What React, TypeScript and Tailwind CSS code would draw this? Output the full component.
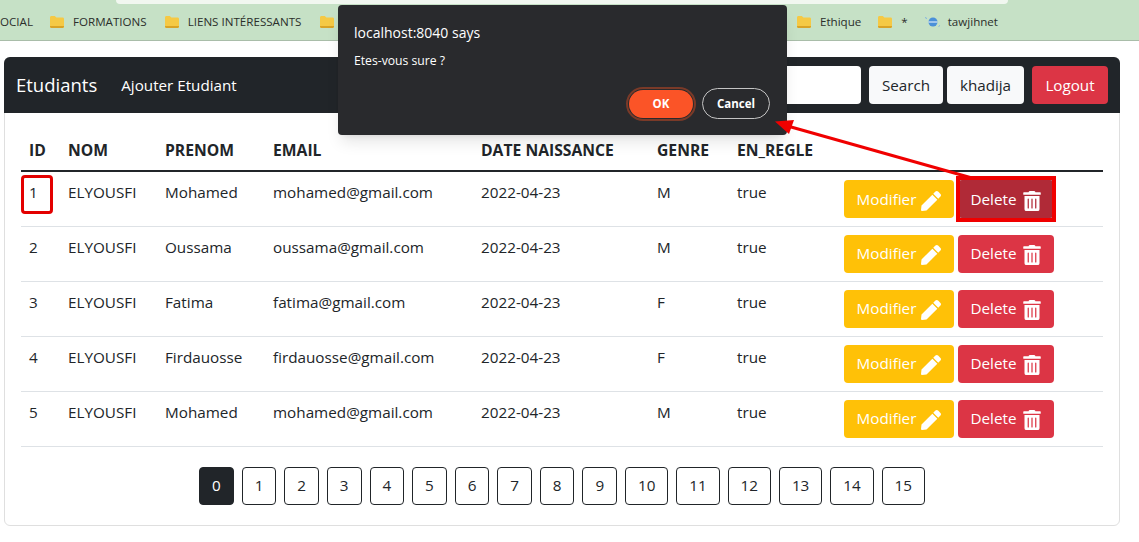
import React from 'react';
import { FaPen, FaTrashAlt } from 'react-icons/fa';

const students = [
  { id: 1, nom: 'ELYOUSFI', prenom: 'Mohamed', email: 'mohamed@gmail.com', genre: 'M' },
  { id: 2, nom: 'ELYOUSFI', prenom: 'Oussama', email: 'oussama@gmail.com', genre: 'M' },
  { id: 3, nom: 'ELYOUSFI', prenom: 'Fatima', email: 'fatima@gmail.com', genre: 'F' },
  { id: 4, nom: 'ELYOUSFI', prenom: 'Firdauosse', email: 'firdauosse@gmail.com', genre: 'F' },
  { id: 5, nom: 'ELYOUSFI', prenom: 'Mohamed', email: 'mohamed@gmail.com', genre: 'M' },
];

const headers = ['ID', 'NOM', 'PRENOM', 'EMAIL', 'DATE NAISSANCE', 'GENRE', 'EN_REGLE', ''];
const pages = Array.from({ length: 16 }, (_, i) => i);

const Folder = () => (
  <svg width="16" height="14" viewBox="0 0 16 14" className="shrink-0">
    <path d="M1 2.5C1 1.7 1.6 1 2.4 1h3.4l1.6 1.6h6.2c.8 0 1.4.6 1.4 1.4v7.6c0 .8-.6 1.4-1.4 1.4H2.4C1.6 13 1 12.4 1 11.6z" fill="#f5c945" />
    <path d="M1 11.6c0 .8.6 1.4 1.4 1.4h11.2c.8 0 1.4-.6 1.4-1.4v-.6H1z" fill="#d9a326" />
  </svg>
);

const Bookmark = ({ label, className }: { label: string; className?: string }) => (
  <div className={`flex items-center gap-2 ${className ?? ''}`}>
    <Folder />
    <span>{label}</span>
  </div>
);

export default function App() {
  return (
    <div className="relative h-[542px] w-[1139px] overflow-hidden bg-white text-[#212529] font-['Open_Sans','Noto_Sans',sans-serif]">
      {/* barre de favoris */}
      <div className="relative h-[41px] border-b border-[#a9bda9] bg-[#c6e1c6] text-[11.6px] text-[#2b2f2b]">
        <div className="ml-[116px] h-[4px] w-[892px] rounded-b-md bg-[#f1f7f0]" />
        <div className="flex h-[36px] items-center whitespace-nowrap">
          <div className="w-[32px] text-right">OCIAL</div>
          <Bookmark label="FORMATIONS" className="ml-[17px]" />
          <Bookmark label="LIENS INTÉRESSANTS" className="ml-[17px]" />
          <div className="ml-[18px]">
            <Folder />
          </div>
          <div className="flex-1" />
          <Bookmark label="Ethique" className="mr-[16px]" />
          <Bookmark label="*" className="mr-[17px]" />
          <div className="mr-[141px] flex items-center gap-[7px]">
            <svg width="16" height="12" viewBox="0 0 16 12">
              <circle cx="8" cy="6" r="4.5" fill="#4a90d9" />
              <path d="M3.5 6h9" stroke="#dbe9f7" strokeWidth="1.2" />
              <path d="M0 1.5l2 1M15 9.5l-1.5 1" stroke="#7fb1e3" strokeWidth="1" />
            </svg>
            <span>tawjihnet</span>
          </div>
        </div>
      </div>

      {/* carte */}
      <div className="ml-1 mt-4 h-[469px] w-[1116px] rounded-md border border-[#dfdfdf]">
        <nav className="-mx-px -mt-px flex h-[56px] items-center rounded-t-md bg-[#212529] px-3 text-white">
          <span className="text-[18.5px]">Etudiants</span>
          <span className="ml-6 text-[15.2px]">Ajouter Etudiant</span>
          <div className="ml-auto flex items-center text-[15.2px]">
            <div className="h-[38px] w-[170px] rounded bg-white" />
            <button className="ml-2 h-[38px] w-[74px] rounded bg-[#f8f9fa] text-[#212529]">Search</button>
            <button className="ml-1 h-[38px] w-[77px] rounded bg-[#f8f9fa] text-[#212529]">khadija</button>
            <button className="ml-2 h-[38px] w-[76px] rounded bg-[#dc3545] text-white">Logout</button>
          </div>
        </nav>

        <div className="px-4 pt-[17px]">
          <table className="w-[1082px] table-fixed border-collapse text-[15.25px]">
            <colgroup>
              <col className="w-[39px]" />
              <col className="w-[97px]" />
              <col className="w-[108px]" />
              <col className="w-[208px]" />
              <col className="w-[176px]" />
              <col className="w-[80px]" />
              <col className="w-[107px]" />
              <col />
            </colgroup>
            <thead>
              <tr className="h-[41px] border-b-2 border-[#212529]">
                {headers.map((h, i) => (
                  <th key={i} className="px-2 pt-[2px] text-left text-[15.7px] font-bold whitespace-nowrap">{h}</th>
                ))}
              </tr>
            </thead>
            <tbody>
              {students.map((s) => (
                <tr key={s.id} className="h-[55px] border-b border-[#dee2e6]">
                  <td className="px-2 pt-2 align-top leading-6">{s.id}</td>
                  <td className="px-2 pt-2 align-top leading-6">{s.nom}</td>
                  <td className="px-2 pt-2 align-top leading-6">{s.prenom}</td>
                  <td className="px-2 pt-2 align-top leading-6">{s.email}</td>
                  <td className="px-2 pt-2 align-top leading-6">2022-04-23</td>
                  <td className="px-2 pt-2 align-top leading-6">{s.genre}</td>
                  <td className="px-2 pt-2 align-top leading-6">true</td>
                  <td className="whitespace-nowrap px-2 pt-2 align-top">
                    <div className="flex gap-1">
                      <button className="flex h-[38px] w-[110px] items-center justify-center gap-[5px] rounded bg-[#ffc107] text-white">
                        Modifier <FaPen size={20} className="mt-[3px]" />
                      </button>
                      <button className={`flex h-[38px] w-[96px] items-center justify-center gap-[5px] rounded text-white ${s.id === 1 ? 'bg-[#b02a37]' : 'bg-[#dc3545]'}`}>
                        Delete <FaTrashAlt size={20} className="mt-[3px]" />
                      </button>
                    </div>
                  </td>
                </tr>
              ))}
            </tbody>
          </table>

          <div className="mt-5 flex justify-center gap-2 text-[15.25px]">
            {pages.map((p) => (
              <button
                key={p}
                className={`h-[38px] rounded border border-[#212529] ${p > 9 ? 'w-[43.3px]' : 'w-[34.6px]'} ${p === 0 ? 'bg-[#212529] text-white' : 'bg-white'}`}
              >
                {p}
              </button>
            ))}
          </div>
        </div>
      </div>

      {/* dialogue */}
      <div className="absolute left-[338px] top-[5px] h-[130px] w-[449px] rounded-sm bg-[#292a2d] px-4 pt-[18px] text-white shadow-lg">
        <div className="text-[14px] leading-5">localhost:8040 says</div>
        <div className="mt-[10px] text-[12.2px] leading-4">Etes-vous sure ?</div>
        <div className="absolute bottom-[16px] right-[17px] flex items-center gap-[9px] text-[11.5px] font-bold">
          <button className="h-[28px] w-[64px] rounded-full bg-[#fb5427] outline-2 outline-offset-1 outline-[#7a3a28]">OK</button>
          <button className="h-[31px] w-[68px] rounded-full border border-[#c4c4c4]">Cancel</button>
        </div>
      </div>

      {/* annotations rouges */}
      <div className="absolute left-[21px] top-[175px] h-[39px] w-[32px] rounded-sm border-[3px] border-[#e30000]" />
      <div className="absolute left-[956px] top-[176px] h-[46px] w-[100px] border-4 border-[#f00000]" />
      <svg className="absolute left-[760px] top-[110px]" width="230" height="80" viewBox="0 0 230 80">
        <path d="M212 68L24 15" stroke="#f00000" strokeWidth="3" />
        <path d="M15 11.5L34 10L29 24z" fill="#f00000" />
      </svg>
    </div>
  );
}
